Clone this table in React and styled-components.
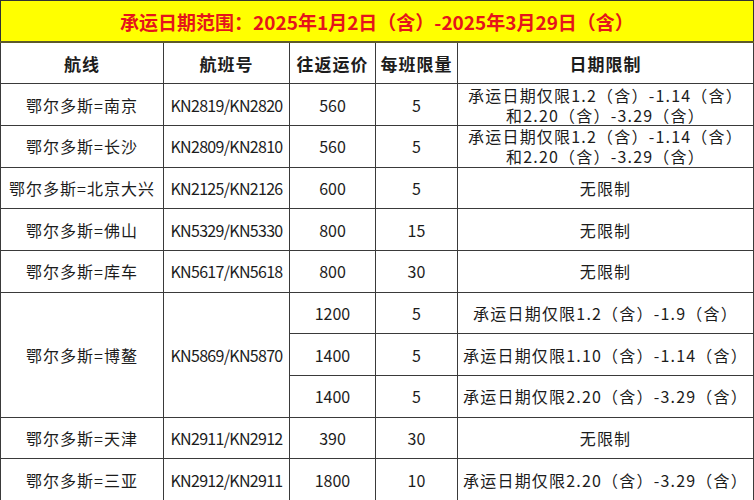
import styled, {createGlobalStyle} from 'styled-components'

const GlobalStyle = createGlobalStyle`
	html, body {
		margin: 0;
		padding: 0;
		background: #fff;
	}
	body {
		font-family: "Noto Sans CJK SC", "Noto Sans", sans-serif;
	}
`

const routes = [
	{route: '鄂尔多斯=南京', flight: 'KN2819/KN2820', fares: [{price: '560', limit: '5', note: ['承运日期仅限1.2（含）-1.14（含）', '和2.20（含）-3.29（含）']}]},
	{route: '鄂尔多斯=长沙', flight: 'KN2809/KN2810', fares: [{price: '560', limit: '5', note: ['承运日期仅限1.2（含）-1.14（含）', '和2.20（含）-3.29（含）']}]},
	{route: '鄂尔多斯=北京大兴', flight: 'KN2125/KN2126', fares: [{price: '600', limit: '5', note: ['无限制']}]},
	{route: '鄂尔多斯=佛山', flight: 'KN5329/KN5330', fares: [{price: '800', limit: '15', note: ['无限制']}]},
	{route: '鄂尔多斯=库车', flight: 'KN5617/KN5618', fares: [{price: '800', limit: '30', note: ['无限制']}]},
	{route: '鄂尔多斯=博鳌', flight: 'KN5869/KN5870', fares: [
		{price: '1200', limit: '5', note: ['承运日期仅限1.2（含）-1.9（含）']},
		{price: '1400', limit: '5', note: ['承运日期仅限1.10（含）-1.14（含）']},
		{price: '1400', limit: '5', note: ['承运日期仅限2.20（含）-3.29（含）']},
	]},
	{route: '鄂尔多斯=天津', flight: 'KN2911/KN2912', fares: [{price: '390', limit: '30', note: ['无限制']}]},
	{route: '鄂尔多斯=三亚', flight: 'KN2912/KN2911', fares: [{price: '1800', limit: '10', note: ['承运日期仅限2.20（含）-3.29（含）']}]},
]

const App = () => {
	return (
		<>
			<GlobalStyle />
			<Sheet>
				<colgroup>
					<col style={{width: 163}} />
					<col style={{width: 126}} />
					<col style={{width: 86}} />
					<col style={{width: 82}} />
					<col />
				</colgroup>
				<tbody>
					<Row>
						<TitleCell colSpan={5}>承运日期范围：2025年1月2日（含）-2025年3月29日（含）</TitleCell>
					</Row>
					<Row>
						<HeadCell>航线</HeadCell>
						<HeadCell>航班号</HeadCell>
						<HeadCell>往返运价</HeadCell>
						<HeadCell>每班限量</HeadCell>
						<HeadCell>日期限制</HeadCell>
					</Row>
					{routes.map(r => r.fares.map((fare, i) => (
						<Row key={r.route + i}>
							{i === 0 && <Cell rowSpan={r.fares.length} $tracking="1px">{r.route}</Cell>}
							{i === 0 && <Cell rowSpan={r.fares.length} $tracking="-0.7px">{r.flight}</Cell>}
							<Cell>{fare.price}</Cell>
							<Cell>{fare.limit}</Cell>
							<Cell $tracking="1.2px" $multi={fare.note.length > 1}>
								{fare.note.map(line => <div key={line}>{line}</div>)}
							</Cell>
						</Row>
					)))}
				</tbody>
			</Sheet>
		</>
	)
}

export default App

const Sheet = styled.table`
	width: 754px;
	height: 500px;
	border-collapse: collapse;
	table-layout: fixed;
	color: #1c1c1c;
`

const Row = styled.tr`
	height: 41.66px;
`

const TitleCell = styled.td`
	background: #ffff00;
	color: #e5141b;
	font-size: 19px;
	font-weight: 700;
	text-align: center;
	padding: 0;
	border: 1px solid #333;
	border-bottom: 2px solid #5e5a2a;
`

const HeadCell = styled.th`
	font-size: 17px;
	font-weight: 700;
	text-align: center;
	padding: 0;
	border: 1px solid #3a3a3a;
	letter-spacing: 1px;
`

const Cell = styled.td`
	font-size: 16px;
	font-weight: 400;
	text-align: center;
	padding: 0;
	border: 1px solid #3a3a3a;
	white-space: nowrap;
	letter-spacing: ${p => p.$tracking || '0'};
	line-height: ${p => p.$multi ? '20px' : 'normal'};
`
